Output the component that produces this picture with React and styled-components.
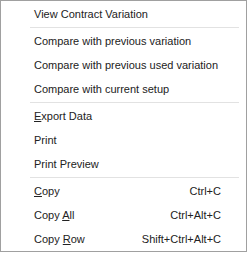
import styled, { createGlobalStyle } from 'styled-components';

const Global = createGlobalStyle`
    body {
        margin: 0;
        background: #ffffff;
    }
`;

const Menu = styled.div`
    width: 247px;
    height: 252px;
    border: 1px solid #a0a0a0;
    padding-top: 1px;
    box-sizing: border-box;
    background: #ffffff;
    font-family: "Liberation Sans", Tahoma, sans-serif;
    font-size: 11px;
    color: #222;
    display: flex;
    flex-direction: column;
`;

const Item = styled.div`
    height: 24px;
    display: flex;
    align-items: center;
    justify-content: space-between;
    padding-left: 33px;
    padding-right: 25px;
    flex-shrink: 0;
`;

const Shortcut = styled.span`
    color: #222;
`;

const Separator = styled.div`
    height: 1px;
    margin: 1px 7px 1px 29px;
    background: #e2e2e2;
    flex-shrink: 0;
`;

const Key = styled.u`
    text-decoration: underline;
    text-underline-offset: 1px;
`;

const ContextMenu = () => {
  return (
    <Menu>
        <Item>View Contract Variation</Item>
        <Separator />
        <Item>Compare with previous variation</Item>
        <Item>Compare with previous used variation</Item>
        <Item>Compare with current setup</Item>
        <Separator />
        <Item><span><Key>E</Key>xport Data</span></Item>
        <Item>Print</Item>
        <Item>Print Preview</Item>
        <Separator />
        <Item><span><Key>C</Key>opy</span><Shortcut>Ctrl+C</Shortcut></Item>
        <Item><span>Copy <Key>A</Key>ll</span><Shortcut>Ctrl+Alt+C</Shortcut></Item>
        <Item><span>Copy <Key>R</Key>ow</span><Shortcut>Shift+Ctrl+Alt+C</Shortcut></Item>
    </Menu>
  );
}

export default function App() {
  return (
    <>
      <Global />
      <ContextMenu />
    </>
  );
}
